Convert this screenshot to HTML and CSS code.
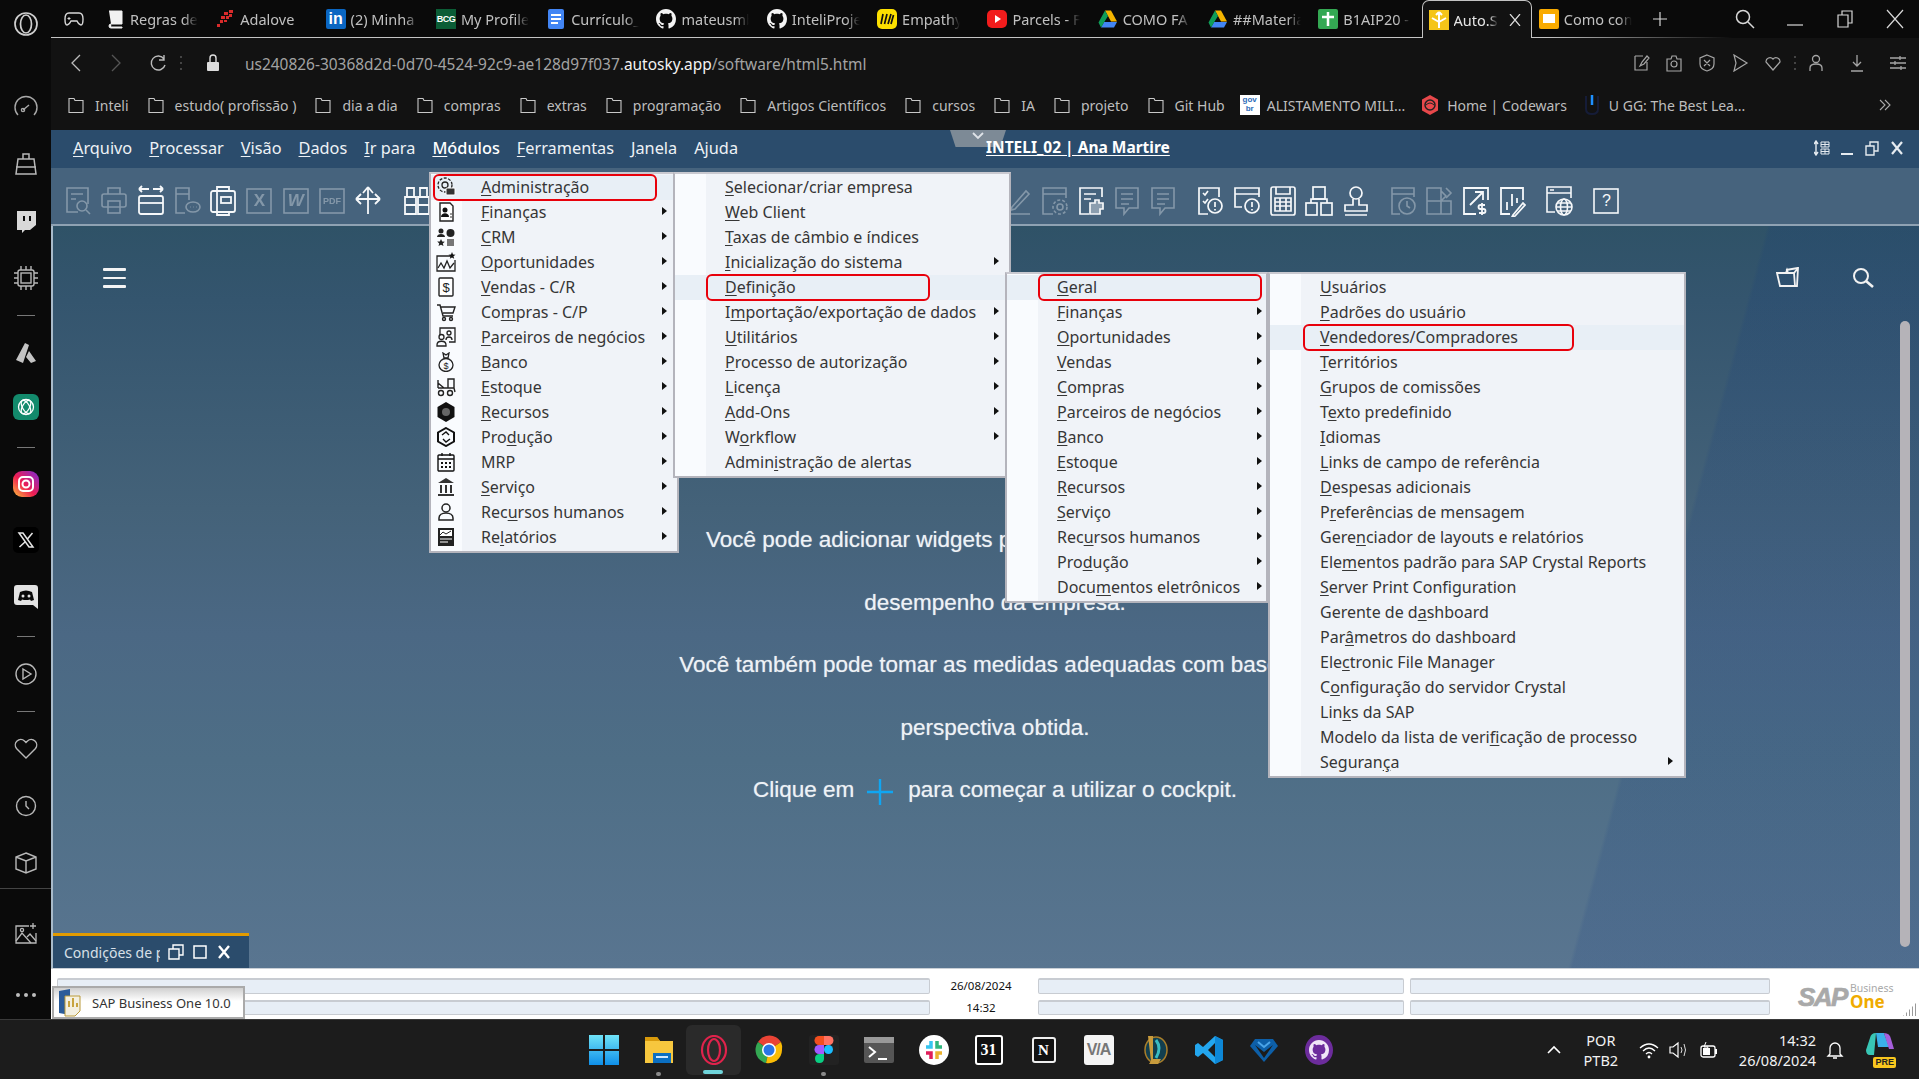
FILE: index.html
```html
<!DOCTYPE html>
<html lang="pt-BR">
<head>
<meta charset="utf-8">
<title>Auto.SAP</title>
<link rel="stylesheet" href="styles.css">
</head>
<body>
<svg class="defs" aria-hidden="true">
<defs>
<symbol id="gh" viewBox="0 0 16 16"><path fill="currentColor" d="M8 0C3.58 0 0 3.58 0 8c0 3.54 2.29 6.53 5.47 7.59.4.07.55-.17.55-.38 0-.19-.01-.82-.01-1.49-2.01.37-2.53-.49-2.69-.94-.09-.23-.48-.94-.82-1.13-.28-.15-.68-.52-.01-.53.63-.01 1.08.58 1.23.82.72 1.21 1.87.87 2.33.66.07-.52.28-.87.51-1.07-1.78-.2-3.64-.89-3.64-3.95 0-.87.31-1.59.82-2.15-.08-.2-.36-1.02.08-2.12 0 0 .67-.21 2.2.82.64-.18 1.32-.27 2-.27.68 0 1.36.09 2 .27 1.53-1.04 2.2-.82 2.2-.82.44 1.1.16 1.92.08 2.12.51.56.82 1.27.82 2.15 0 3.07-1.87 3.75-3.65 3.95.29.25.54.73.54 1.48 0 1.07-.01 1.93-.01 2.2 0 .21.15.46.55.38A8.013 8.013 0 0016 8c0-4.42-3.58-8-8-8z"/></symbol>
<symbol id="drive" viewBox="0 0 20 20"><path fill="#f4b400" d="M7 1.500h6l6 11h-6z"/><path fill="#4285f4" d="M6 13h13l-3 5.500H3z"/><path fill="#0f9d58" d="M7 1.500 10 7l-4 6.500-3 5-2.500-5z"/></symbol>
<symbol id="folder" viewBox="0 0 16 18"><path fill="none" stroke="#c8c8c8" stroke-width="1.100" d="M1 2.500h5l1 2h8v12H1z"/></symbol>

<symbol id="t-find" viewBox="0 0 28 32"><g fill="none" stroke="currentColor" stroke-width="1.600"><path d="M14 27H3V3h21v16"/><path d="M7 9h12M7 14h5"/><circle cx="18" cy="21" r="5"/><path d="m22 25 4 4"/></g></symbol>
<symbol id="t-print" viewBox="0 0 28 32"><g fill="none" stroke="currentColor" stroke-width="1.600"><path d="M8 9V3h12v6"/><rect x="2" y="9" width="24" height="13" rx="2"/><rect x="8" y="16" width="12" height="12"/></g></symbol>
<symbol id="t-width" viewBox="0 0 28 32"><g fill="none" stroke="currentColor" stroke-width="1.800"><path d="M2 4h10M2 4l3-3M2 4l3 3M26 4H16M26 4l-3-3M26 4l-3 3"/><rect x="2" y="11" width="24" height="18" rx="2"/><path d="M2 18h24"/></g></symbol>
<symbol id="t-doc" viewBox="0 0 28 32"><g fill="none" stroke="currentColor" stroke-width="1.600"><path d="M12 28H3V3h13v12M3 9h13"/><ellipse cx="20" cy="22" rx="7" ry="5"/><path d="M17 22h.5M20 22h.5M23 22h.5"/></g></symbol>
<symbol id="t-window" viewBox="0 0 28 32"><g fill="none" stroke="currentColor" stroke-width="1.800"><rect x="2" y="6" width="24" height="21" rx="2"/><path d="M8 6V2h12v4M8 27v3h12v-3M8 6v21"/><rect x="12" y="12" width="10" height="6"/></g></symbol>
<symbol id="t-box" viewBox="0 0 28 32"><rect x="2" y="4" width="24" height="24" fill="none" stroke="currentColor" stroke-width="1.600"/></symbol>
<symbol id="t-move" viewBox="0 0 28 32"><g fill="none" stroke="currentColor" stroke-width="1.800"><path d="M14 2v27M2 14h24M14 2l-5 6M14 2l5 6M2 14l5-5M2 14l5 5M26 14l-5-5M26 14l-5 5"/></g></symbol>
<symbol id="t-bino" viewBox="0 0 28 32"><g fill="none" stroke="currentColor" stroke-width="1.800"><path d="M4 12V3h7v9M17 12V3h7v9M2 12h11v17H2zM15 12h11v17H15zM2 20h11M15 20h11"/></g></symbol>
<symbol id="t-pencil" viewBox="0 0 28 32"><g fill="none" stroke="currentColor" stroke-width="1.600"><path d="m8 22 14-16 3 3-14 15-4 1zM2 29h24"/></g></symbol>
<symbol id="t-gear" viewBox="0 0 28 32"><g fill="none" stroke="currentColor" stroke-width="1.600"><path d="M26 13V3H3v26h10M3 9h23"/><circle cx="20" cy="22" r="3"/><circle cx="20" cy="22" r="7" stroke-dasharray="3 2"/></g></symbol>
<symbol id="t-puzzle" viewBox="0 0 28 32"><g fill="none" stroke="currentColor" stroke-width="1.700"><path d="M12 29H3V3h22v9M7 9h12M7 14h7"/><path d="M13 29V18h5v-3h4v3h4v6h-3v5z" fill="currentColor" fill-opacity=".4"/></g></symbol>
<symbol id="t-chat" viewBox="0 0 28 32"><g fill="none" stroke="currentColor" stroke-width="1.600"><path d="M3 3h22v20h-9l-5 6v-6H3zM8 9h12M8 14h12M8 19h8"/></g></symbol>
<symbol id="t-alert" viewBox="0 0 28 32"><g fill="none" stroke="currentColor" stroke-width="1.700"><path d="M12 29H3V3h20v9"/><path d="m7 8 2 2 3-4M7 16l2 2 3-4"/><circle cx="19" cy="21" r="7"/><path d="M19 17v5M19 24v1.500"/></g></symbol>
<symbol id="t-walert" viewBox="0 0 28 32"><g fill="none" stroke="currentColor" stroke-width="1.700"><path d="M9 22H2V3h24v9M2 9h24"/><circle cx="19" cy="21" r="7"/><path d="M19 17v5M19 24v1.500"/></g></symbol>
<symbol id="t-calc" viewBox="0 0 28 32"><g fill="none" stroke="currentColor" stroke-width="1.700"><rect x="2" y="2" width="24" height="28" rx="2"/><path d="M7 2v7h14V2M6 13h16v13H6zM11 13v13M17 13v13M6 17h16M6 21h16"/></g></symbol>
<symbol id="t-org" viewBox="0 0 28 32"><g fill="none" stroke="currentColor" stroke-width="1.700"><rect x="8" y="2" width="12" height="12"/><rect x="1" y="18" width="11" height="12"/><rect x="16" y="18" width="11" height="12"/><path d="M6 18v-4h16v4"/></g></symbol>
<symbol id="t-stamp" viewBox="0 0 28 32"><g fill="none" stroke="currentColor" stroke-width="1.700"><circle cx="14" cy="8" r="6"/><path d="M11 14v6H3v6h22v-6h-8v-6M3 30h22"/></g></symbol>
<symbol id="t-clock" viewBox="0 0 28 32"><g fill="none" stroke="currentColor" stroke-width="1.600"><path d="M11 29H3V3h22v9M3 9h22"/><circle cx="18" cy="21" r="8"/><path d="M18 16v5l3 2"/></g></symbol>
<symbol id="t-grid" viewBox="0 0 28 32"><g fill="none" stroke="currentColor" stroke-width="1.600"><path d="M2 3h14v26H2zM2 16h24v13H16M16 16V6l5 5-5 5"/><path d="m21 3 5 5-5 5"/></g></symbol>
<symbol id="t-chart" viewBox="0 0 28 32"><g fill="none" stroke="currentColor" stroke-width="1.800"><path d="M14 29H2V3h24v12"/><path d="m8 20 13-13M13 7h8v8"/><path d="M20 18v12M23 20h-4.500a1.800 1.800 0 0 0 0 4h3a1.800 1.800 0 0 1 0 4H17"/></g></symbol>
<symbol id="t-bars" viewBox="0 0 28 32"><g fill="none" stroke="currentColor" stroke-width="1.800"><path d="M12 29H3V3h22v12"/><path d="M9 17v8M14 9v12M19 13v5"/><path d="m15 30 10-12 2 2-10 11-3 1z"/></g></symbol>
<symbol id="t-globe" viewBox="0 0 28 32"><g fill="none" stroke="currentColor" stroke-width="1.600"><path d="M10 27H2V2h24v11M2 8h24M5 5h4"/><circle cx="19" cy="22" r="8"/><ellipse cx="19" cy="22" rx="3.500" ry="8"/><path d="M11 22h16M12 18h14M12 26h14"/></g></symbol>

<symbol id="m-admin" viewBox="0 0 20 20"><g fill="none" stroke="#222" stroke-width="1.300"><circle cx="9" cy="8" r="3"/><circle cx="9" cy="8" r="7" stroke-dasharray="3 1.500"/></g><rect x="10" y="11" width="9" height="7" rx="1" fill="#333" stroke="#fff"/></symbol>
<symbol id="m-fin" viewBox="0 0 20 20"><path d="M4 1h10l3 3v15H4z" fill="#fff" stroke="#222" stroke-width="1.400"/><circle cx="9" cy="8" r="2.500" fill="#111"/><path d="M5 15c0-5 8-5 8 0z" fill="#111"/><path d="M14 12h2M14 15h2" stroke="#333"/></symbol>
<symbol id="m-crm" viewBox="0 0 20 20"><circle cx="5" cy="4" r="2.500" fill="#222"/><path d="M1 10c0-4 8-4 8 0z" fill="#222"/><circle cx="14.500" cy="6" r="4" fill="#222"/><path d="m5 12 1.200 2.500 2.600.2-2 1.800.7 2.600L5 17.700 2.500 19l.7-2.600-2-1.800 2.600-.2z" fill="#222"/><rect x="11" y="12" width="7" height="7" fill="#777"/></symbol>
<symbol id="m-opp" viewBox="0 0 20 20"><g fill="none" stroke="#222" stroke-width="1.300"><path d="M15 4H1v15h18V8"/><path d="m2 16 3-5 3 5 3-7 3 7 4-5"/></g><path d="m16 0 1 2.500 2.500.2-2 1.600.7 2.500-2.200-1.400-2.200 1.400.7-2.500-2-1.600 2.500-.2z" fill="#111"/></symbol>
<symbol id="m-sale" viewBox="0 0 20 20"><rect x="3" y="1" width="14" height="18" rx="1" fill="#fff" stroke="#222" stroke-width="1.400"/></symbol>
<symbol id="m-cart" viewBox="0 0 20 20"><g fill="none" stroke="#222" stroke-width="1.400"><path d="M1 3h3l3 11h10M5 5h14l-2 6H7"/><circle cx="8" cy="17" r="1.500"/><circle cx="15" cy="17" r="1.500"/></g></symbol>
<symbol id="m-part" viewBox="0 0 20 20"><g fill="none" stroke="#222" stroke-width="1.300"><path d="M4 8V1h15v14h-6"/><circle cx="5.500" cy="10" r="2.500"/><path d="M1 18c0-5 9-5 9 0v1H1z"/><circle cx="13" cy="6" r="2"/><path d="M10 13c0-4 6-4 6 0"/></g></symbol>
<symbol id="m-bank" viewBox="0 0 20 20"><g fill="none" stroke="#222" stroke-width="1.300"><path d="m7 1 3 2 3-2-1 5H8z"/><ellipse cx="10" cy="13" rx="7" ry="6.500"/></g><text x="10" y="16.500" font-size="9" text-anchor="middle" fill="#222" font-family="Liberation Sans">$</text></symbol>
<symbol id="m-stock" viewBox="0 0 20 20"><g fill="none" stroke="#222" stroke-width="1.400"><circle cx="5" cy="16" r="2.500"/><circle cx="14" cy="16" r="2.500"/><path d="M2 11h16l1 4M2 11V3M2 6l6 5M12 2h6v9h-6z"/></g></symbol>
<symbol id="m-res" viewBox="0 0 20 20"><path d="m10 0 8.500 5v10L10 20 1.500 15V5z" fill="#111"/><circle cx="10" cy="10" r="4" fill="#666"/></symbol>
<symbol id="m-prod" viewBox="0 0 20 20"><g fill="none" stroke="#111" stroke-width="2"><path d="m10 1 8 4.500v9L10 19l-8-4.500v-9z"/><path d="m6 8 4-3 3 3M14 12l-4 3-3-3" stroke-width="1.400"/></g></symbol>
<symbol id="m-mrp" viewBox="0 0 20 20"><g fill="none" stroke="#111" stroke-width="1.400"><rect x="2" y="3" width="16" height="16" rx="1"/><path d="M2 7h16M6 1v3M14 1v3"/></g><path d="M5 10h2v2H5zM9 10h2v2H9zM13 10h2v2h-2zM5 14h2v2H5zM9 14h2v2H9zM13 14h2v2h-2z" fill="#111"/></symbol>
<symbol id="m-serv" viewBox="0 0 20 20"><path d="m10 1 8 5H2zM2 17h16v2H2zM4 8h2v8H4zM9 8h2v8H9zM14 8h2v8h-2z" fill="#333"/></symbol>
<symbol id="m-hr" viewBox="0 0 20 20"><g fill="none" stroke="#222" stroke-width="1.500"><circle cx="10" cy="6" r="4"/><path d="M3 18v-2c0-3 3-5 7-5s7 2 7 5v2z"/></g></symbol>
<symbol id="m-rep" viewBox="0 0 20 20"><rect x="2" y="1" width="16" height="18" fill="#222"/><rect x="4" y="3" width="12" height="6" fill="#fff"/><path d="m4 8 3-3 3 2 5-3" stroke="#222" fill="none"/><path d="M4 12h12M4 15h8" stroke="#fff" stroke-width="1.200"/></symbol>
</defs>
</svg>

<div class="desktop">
  <div class="browser">
    <aside class="sidebar">
      <div class="side-top">
        <svg class="i26" viewBox="0 0 26 26"><g fill="none" stroke="#cfcfcf" stroke-width="1.700"><circle cx="13" cy="13" r="11"/><ellipse cx="13" cy="13" rx="5.500" ry="9"/></g></svg>
      </div>
      <div class="slot"><svg class="i26" viewBox="0 0 26 26"><g fill="none" stroke="#a8a8a8" stroke-width="1.400"><path d="M5 21a11 11 0 1 1 16 0"/><path d="m10 16 6-5"/><circle cx="10" cy="16" r="1.600"/></g></svg></div>
      <div class="slot"><svg class="i26" viewBox="0 0 26 26"><g fill="none" stroke="#b8b8b8" stroke-width="1.500"><path d="M10 8V3h6v5M5 8h16l2 15H3zM3 16h20"/></g></svg></div>
      <div class="slot"><svg class="i26" viewBox="0 0 26 26"><path d="M4 3h19v14l-6 5h-5l-3 3v-3H4z" fill="#d8d8d8"/><path d="M11 8v5M17 8v5" stroke="#0a0a0a" stroke-width="2"/></svg></div>
      <div class="slot"><svg class="i26" viewBox="0 0 26 26"><g fill="none" stroke="#b8b8b8" stroke-width="1.400"><rect x="5" y="5" width="16" height="16" rx="2"/><rect x="8" y="8" width="10" height="10"/><path d="M1 8h4M1 13h4M1 18h4M21 8h4M21 13h4M21 18h4M8 1v4M13 1v4M18 1v4M8 21v4M13 21v4M18 21v4"/></g></svg></div>
      <div class="side-sep"></div>
      <div class="slot"><svg class="i26" viewBox="0 0 26 26"><path d="m12 3 4 2-6 18-7-3zM16 11l7 10-5 2-5-6z" fill="#c4c4c4"/></svg></div>
      <div class="slot slot-gpt"><svg class="i26" viewBox="0 0 26 26"><rect x="0" y="0" width="26" height="26" rx="6" fill="#138a6c"/><g fill="none" stroke="#fff" stroke-width="1.300"><circle cx="13" cy="13" r="7.500"/><ellipse cx="13" cy="13" rx="7.500" ry="3.500" transform="rotate(60 13 13)"/><ellipse cx="13" cy="13" rx="7.500" ry="3.500" transform="rotate(-60 13 13)"/></g></svg></div>
      <div class="side-sep"></div>
      <div class="slot slot-up"><svg class="i26" viewBox="0 0 26 26"><defs><linearGradient id="ig" x1="0" y1="1" x2="1" y2="0"><stop offset="0" stop-color="#fdc13b"/><stop offset=".45" stop-color="#ee1d52"/><stop offset="1" stop-color="#7c2bd6"/></linearGradient></defs><rect width="26" height="26" rx="9" fill="url(#ig)"/><g fill="none" stroke="#fff" stroke-width="2"><rect x="6" y="6" width="14" height="14" rx="4"/><circle cx="13" cy="13" r="3.500"/></g></svg></div>
      <div class="slot slot-up2"><svg class="i26" viewBox="0 0 26 26"><rect width="26" height="26" rx="5" fill="#000"/><path d="M6 6h4l10 14h-4zM19.500 6 14 12.500M12 15l-5.500 5" fill="none" stroke="#e6e6e6" stroke-width="1.500"/></svg></div>
      <div class="slot slot-down"><svg class="i26" viewBox="0 0 26 26"><path d="M4 1h18q3 0 3 3v21l-5-4H4q-3 0-3-3V4q0-3 3-3z" fill="#e3e3e3"/><path d="M7 8q6-3 12 0l2 8-3 1-1-1.500q-4 1-8 0L8 17l-3-1z" fill="#0a0a0a"/><circle cx="10" cy="12" r="1.500" fill="#e3e3e3"/><circle cx="16" cy="12" r="1.500" fill="#e3e3e3"/></svg></div>
      <div class="side-sep"></div>
      <div class="slot"><svg class="i26" viewBox="0 0 26 26"><g fill="none" stroke="#b8b8b8" stroke-width="1.400"><circle cx="13" cy="13" r="10"/><path d="m10 8 8 5-8 5z"/></g></svg></div>
      <div class="side-sep"></div>
      <div class="slot"><svg class="i26" viewBox="0 0 26 26"><path d="M13 22 3.500 12.500a5.500 5.500 0 0 1 8-7.500l1.500 1.500L14.500 5a5.500 5.500 0 0 1 8 7.500z" fill="none" stroke="#b8b8b8" stroke-width="1.400"/></svg></div>
      <div class="slot"><svg class="i26" viewBox="0 0 26 26"><g fill="none" stroke="#b8b8b8" stroke-width="1.400"><circle cx="13" cy="13" r="9.500"/><path d="M13 8v5l3 3"/></g></svg></div>
      <div class="slot slot-last"><svg class="i26" viewBox="0 0 26 26"><g fill="none" stroke="#b8b8b8" stroke-width="1.400"><path d="m13 3 10 4v12l-10 4-10-4V7zM3 7l10 4 10-4M13 11v12"/></g></svg></div>
      <div class="side-line"></div>
      <div class="slot slot-img"><svg class="i26" viewBox="0 0 26 26"><g fill="none" stroke="#b8b8b8" stroke-width="1.300"><path d="M16 5H3v17h20v-10"/><path d="m3 20 6-8 9 10M14 16l3-3 6 7"/><circle cx="9" cy="9" r="1.600"/><path d="M20 2v6M17 5h6"/></g></svg></div>
      <div class="side-dots"><span></span><span></span><span></span></div>
    </aside>

    <div class="window">
      <div class="tabs">
        <div class="tab-game"><svg class="i20" viewBox="0 0 20 20"><path d="M5 4h10q4 0 4 6t-2 6q-2 0-4-4H7q-2 4-4 4T1 10t4-6z" fill="none" stroke="#d8d8d8" stroke-width="1.400"/><path d="M5 8v3M3.500 9.500h3" stroke="#d8d8d8"/></svg></div>
        <div class="tab"><svg class="i20" viewBox="0 0 20 20"><path d="M4 2h13v13H6q-2 0-2 2t2 2h11v-1H6.500" fill="#f1f1f1" stroke="#f1f1f1"/></svg><span class="tab-label">Regras de</span></div>
        <div class="tab"><svg class="i20" viewBox="0 0 20 20"><g fill="#d92b2b"><rect x="14" y="1" width="4" height="3"/><rect x="9" y="3" width="4" height="3"/><rect x="14" y="5" width="3" height="3"/><rect x="6" y="7" width="4" height="3"/><rect x="11" y="7" width="3" height="3"/><rect x="5" y="11" width="3" height="3"/><rect x="9" y="11" width="3" height="2"/><rect x="2" y="15" width="3" height="3"/></g></svg><span class="tab-label">Adalove</span></div>
        <div class="tab"><span class="fav fav-in">in</span><span class="tab-label">(2) Minha</span></div>
        <div class="tab"><span class="fav fav-bcg">BCG</span><span class="tab-label">My Profile</span></div>
        <div class="tab"><svg class="i20" viewBox="0 0 20 20"><rect x="2" width="16" height="20" rx="2" fill="#4285f4"/><path d="M5 6h10M5 10h10M5 14h7" stroke="#fff" stroke-width="1.800"/></svg><span class="tab-label">Currículo_</span></div>
        <div class="tab"><svg class="i20 gh"><use href="#gh"/></svg><span class="tab-label">mateusmb</span></div>
        <div class="tab"><svg class="i20 gh"><use href="#gh"/></svg><span class="tab-label">InteliProje</span></div>
        <div class="tab"><svg class="i20" viewBox="0 0 20 20"><rect width="20" height="20" rx="5" fill="#fce000"/><path d="m6 5-2 10M10 5l-2.500 10M14 5l-3 10M16.500 6 14 15" stroke="#111" stroke-width="1.700" fill="none"/></svg><span class="tab-label tab-cut">Empathy</span></div>
        <div class="tab"><svg class="i20" viewBox="0 0 20 20"><rect y="1" width="20" height="18" rx="5" fill="#f21c1c"/><path d="m8 6 6 4-6 4z" fill="#fff"/></svg><span class="tab-label">Parcels - F</span></div>
        <div class="tab"><svg class="i20"><use href="#drive"/></svg><span class="tab-label">COMO FA</span></div>
        <div class="tab"><svg class="i20"><use href="#drive"/></svg><span class="tab-label">##Materia</span></div>
        <div class="tab"><svg class="i20" viewBox="0 0 20 20"><rect width="20" height="20" rx="2" fill="#34a853"/><path d="M10 3v14M4 8h12" stroke="#fff" stroke-width="2.500"/></svg><span class="tab-label">B1AIP20 -</span></div>
        <div class="tab tab-active"><svg class="i20" viewBox="0 0 20 20"><rect width="20" height="20" fill="#f5c518"/><path d="M10 2v16M10 2 7 5M10 2l3 3M10 12 3 8M10 12l7-4" stroke="#fff" stroke-width="2" fill="none"/></svg><span class="tab-label tab-short">Auto.S</span><svg class="i12" viewBox="0 0 12 12"><path d="m1 0 10 12M11 0 1 12" stroke="#ddd" stroke-width="1.200"/></svg></div>
        <div class="tab"><svg class="i20" viewBox="0 0 20 20"><rect width="20" height="20" rx="2" fill="#f9ab00"/><rect x="4" y="5" width="12" height="9" fill="#fff"/></svg><span class="tab-label">Como con</span></div>
        <svg class="tab-plus" viewBox="0 0 14 14"><path d="M7 0v14M0 7h14" stroke="#d8d8d8" stroke-width="1.200"/></svg>
        <div class="win-ctrls">
          <svg class="i20" viewBox="0 0 20 20"><g fill="none" stroke="#d8d8d8" stroke-width="1.500"><circle cx="8" cy="8" r="6.500"/><path d="m13 13 6 6"/></g></svg>
          <svg class="i20" viewBox="0 0 20 20"><path d="M2 16h16" stroke="#d8d8d8" stroke-width="1.200"/></svg>
          <svg class="i20" viewBox="0 0 20 20"><path d="M3 6h10v12H3zM7 6V2h10v12h-4" fill="none" stroke="#d8d8d8" stroke-width="1.200"/></svg>
          <svg class="i20" viewBox="0 0 20 20"><path d="m2 1 16 18M18 1 2 19" stroke="#d8d8d8" stroke-width="1.200"/></svg>
        </div>
      </div>

      <div class="addr">
        <svg class="nav nav-back" viewBox="0 0 12 20"><path d="M10 2 2 10l8 8" fill="none" stroke="#bbb" stroke-width="1.300"/></svg>
        <svg class="nav nav-fwd" viewBox="0 0 12 20"><path d="m2 2 8 8-8 8" fill="none" stroke="#555" stroke-width="1.300"/></svg>
        <svg class="nav nav-reload" viewBox="0 0 18 20"><path d="M15 6a7 7 0 1 0 1 6M15 2v5h-5" fill="none" stroke="#bbb" stroke-width="1.400"/></svg>
        <span class="nav-dots"></span>
        <svg class="nav nav-lock" viewBox="0 0 14 20"><path d="M4 9V5a3 3 0 0 1 6 0v4" fill="none" stroke="#ddd" stroke-width="1.400"/><rect x="1" y="9" width="12" height="9" rx="1" fill="#ddd"/></svg>
        <span class="url">us240826-30368d2d-0d70-4524-92c9-ae128d97f037.<b>autosky.app</b>/software/html5.html</span>
        <div class="addr-tools">
          <svg class="i18" viewBox="0 0 18 18"><path d="M3 2h8M3 2v14h12V8M8 12l2-4 5-6 2 2-5 6z" fill="none" stroke="#a5a5a5" stroke-width="1.200"/></svg>
          <svg class="i18" viewBox="0 0 18 18"><g fill="none" stroke="#a5a5a5" stroke-width="1.200"><path d="M2 5h4l1-3h4l1 3h4v12H2z"/><circle cx="9" cy="10" r="3"/></g></svg>
          <svg class="i18" viewBox="0 0 18 18"><path d="m9 1 7 3v6q0 5-7 7-7-2-7-7V4zM6 6l6 6M12 6l-6 6" fill="none" stroke="#a5a5a5" stroke-width="1.200"/></svg>
          <svg class="i18" viewBox="0 0 18 18"><path d="m3 1 13 8-13 8 2-8z" fill="none" stroke="#a5a5a5" stroke-width="1.200"/></svg>
          <svg class="i18" viewBox="0 0 18 18"><path d="M9 16 2 8a4 4 0 0 1 7-3 4 4 0 0 1 7 3z" fill="none" stroke="#a5a5a5" stroke-width="1.200"/></svg>
          <span class="tool-gap"></span>
          <svg class="i18" viewBox="0 0 18 18"><g fill="none" stroke="#a5a5a5" stroke-width="1.300"><circle cx="9" cy="5" r="3.500"/><path d="M3 17v-3q0-4 6-4t6 4v3"/></g></svg>
          <svg class="i18 tool-wide" viewBox="0 0 18 18"><path d="M9 1v11M5 8l4 4 4-4M3 17h12" fill="none" stroke="#a5a5a5" stroke-width="1.300"/></svg>
          <svg class="i18 tool-wide" viewBox="0 0 18 18"><path d="M1 4h16M1 9h16M1 14h16M11 2v4M6 7v4M12 12v4" fill="none" stroke="#a5a5a5" stroke-width="1.300"/></svg>
        </div>
      </div>

      <div class="marks">
        <span class="mark"><svg class="i-folder"><use href="#folder"/></svg>Inteli</span>
        <span class="mark"><svg class="i-folder"><use href="#folder"/></svg>estudo( profissão )</span>
        <span class="mark"><svg class="i-folder"><use href="#folder"/></svg>dia a dia</span>
        <span class="mark"><svg class="i-folder"><use href="#folder"/></svg>compras</span>
        <span class="mark"><svg class="i-folder"><use href="#folder"/></svg>extras</span>
        <span class="mark"><svg class="i-folder"><use href="#folder"/></svg>programação</span>
        <span class="mark"><svg class="i-folder"><use href="#folder"/></svg>Artigos Científicos</span>
        <span class="mark"><svg class="i-folder"><use href="#folder"/></svg>cursos</span>
        <span class="mark"><svg class="i-folder"><use href="#folder"/></svg>IA</span>
        <span class="mark"><svg class="i-folder"><use href="#folder"/></svg>projeto</span>
        <span class="mark"><svg class="i-folder"><use href="#folder"/></svg>Git Hub</span>
        <span class="mark mark-fav"><span class="fav-gov">gov<br>br</span>ALISTAMENTO MILI...</span>
        <span class="mark mark-fav"><svg class="i20" viewBox="0 0 20 20"><path d="m10 0 8 4.500v11L10 20l-8-4.500v-11z" fill="#e8484b"/><circle cx="10" cy="10" r="5" fill="none" stroke="#222" stroke-width="1.500"/><path d="M6 10q4-4 8 0" stroke="#222" fill="none"/></svg>Home | Codewars</span>
        <span class="mark mark-fav"><svg class="i20" viewBox="0 0 20 20"><path d="M4 1v13q0 5 6 5t6-5V1" fill="none" stroke="#151c38" stroke-width="2"/><path d="M10 0v10" stroke="#1e90ff" stroke-width="2.500"/></svg>U GG: The Best Lea...</span>
        <svg class="marks-more" viewBox="0 0 14 14"><path d="m2 2 5 5-5 5M7 2l5 5-5 5" fill="none" stroke="#aaa" stroke-width="1.100"/></svg>
      </div>

      <div class="sap">
        <div class="sap-title">
          <nav class="sap-menu">
            <span><u>A</u>rquivo</span><span><u>P</u>rocessar</span><span><u>V</u>isão</span><span><u>D</u>ados</span><span><u>I</u>r para</span><span class="on"><u>M</u>ódulos</span><span><u>F</u>erramentas</span><span><u>J</u>anela</span><span>A<u>j</u>uda</span>
          </nav>
          <div class="sap-handle"><svg class="i12" viewBox="0 0 12 12"><path d="m1 3 5 5 5-5" fill="none" stroke="#dfe3e8" stroke-width="1.800"/></svg></div>
          <span class="sap-user">INTELI_02 | Ana Martire</span>
          <div class="sap-ctrls">
            <svg class="i16" viewBox="0 0 16 16"><path d="M2 1v14M0 4l2-3 2 3M0 12l2 3 2-3" stroke="#e6ebf0" stroke-width="1.400" fill="none"/><path d="M7 2h8v5H7zM7 9h8v5H7zM11 2v5M11 9v5M7 4.500h8M7 11.500h8" stroke="#e6ebf0" fill="none"/></svg>
            <svg class="i16" viewBox="0 0 16 16"><path d="M2 14h12" stroke="#e6ebf0" stroke-width="2"/></svg>
            <svg class="i16" viewBox="0 0 16 16"><path d="M2 6h8v9H2zM6 6V2h8v9h-4" fill="none" stroke="#e6ebf0" stroke-width="1.400"/></svg>
            <svg class="i16" viewBox="0 0 16 16"><path d="m3 2 10 12M13 2 3 14" stroke="#e6ebf0" stroke-width="2.200"/></svg>
          </div>
        </div>

        <div class="sap-tools">
          <svg class="ti dim"><use href="#t-find"/></svg>
          <svg class="ti dim"><use href="#t-print"/></svg>
          <svg class="ti"><use href="#t-width"/></svg>
          <svg class="ti dim"><use href="#t-doc"/></svg>
          <svg class="ti"><use href="#t-window"/></svg>
          <span class="ti-box dim"><svg class="ti-abs"><use href="#t-box"/></svg><b>X</b></span>
          <span class="ti-box dim"><svg class="ti-abs"><use href="#t-box"/></svg><i>W</i></span>
          <span class="ti-box dim"><svg class="ti-abs"><use href="#t-box"/></svg><b class="pdf">PDF</b></span>
          <svg class="ti"><use href="#t-move"/></svg>
          <svg class="ti ti-after"><use href="#t-bino"/></svg>
          <svg class="ti ti-hidden dim"><use href="#t-pencil"/></svg>
          <svg class="ti dim"><use href="#t-gear"/></svg>
          <svg class="ti"><use href="#t-puzzle"/></svg>
          <svg class="ti dim"><use href="#t-chat"/></svg>
          <svg class="ti dim"><use href="#t-chat"/></svg>
          <svg class="ti ti-gap"><use href="#t-alert"/></svg>
          <svg class="ti"><use href="#t-walert"/></svg>
          <svg class="ti"><use href="#t-calc"/></svg>
          <svg class="ti"><use href="#t-org"/></svg>
          <svg class="ti"><use href="#t-stamp"/></svg>
          <svg class="ti ti-gap dim"><use href="#t-clock"/></svg>
          <svg class="ti dim"><use href="#t-grid"/></svg>
          <svg class="ti"><use href="#t-chart"/></svg>
          <svg class="ti"><use href="#t-bars"/></svg>
          <svg class="ti ti-gap"><use href="#t-globe"/></svg>
          <span class="ti-box ti-gap"><svg class="ti-abs"><use href="#t-box"/></svg><em>?</em></span>
        </div>

        <main class="sap-main">
          <div class="main-top">
            <div class="burger"><span></span><span></span><span></span></div>
            <svg class="main-ic" viewBox="0 0 24 22"><g fill="none" stroke="#f2f2f2" stroke-width="1.800"><path d="M1 6h9l1-3 1 3M4 19 1 6h17l4-5-1 18z"/><path d="M18 6l1 13M10 3l12-2"/></g></svg>
            <svg class="main-ic main-ic-s" viewBox="0 0 22 22"><g fill="none" stroke="#f2f2f2" stroke-width="2"><circle cx="9" cy="9" r="7"/><path d="m14 14 7 6" stroke-width="2.600"/></g></svg>
          </div>
          <div class="scroll"></div>
          <div class="intro">
            <p>Você pode adicionar widgets para acompanhar o principal</p>
            <p>desempenho da empresa.</p>
            <p>Você também pode tomar as medidas adequadas com base na</p>
            <p>perspectiva obtida.</p>
            <p class="intro-plus">Clique em <svg class="plus" viewBox="0 0 26 26"><path d="M13 0v26M0 13h26" stroke="#0fa6f2" stroke-width="2.400"/></svg> para começar a utilizar o cockpit.</p>
          </div>
          <div class="dock">
            <span class="dock-text">Condições de p</span>
            <svg class="i16 dock-a" viewBox="0 0 16 16"><path d="M1 5h10v10H1zM5 5V1h10v10h-4" fill="none" stroke="#fff" stroke-width="1.400"/></svg>
            <svg class="i16 dock-b" viewBox="0 0 16 16"><rect x="2" y="2" width="12" height="12" fill="none" stroke="#fff" stroke-width="1.500"/></svg>
            <svg class="i16 dock-b" viewBox="0 0 16 16"><path d="m3 2 10 12M13 2 3 14" stroke="#fff" stroke-width="2.400"/></svg>
          </div>
        </main>

        <div class="status">
          <span class="fld fld-1"></span>
          <span class="st-date">26/08/2024</span>
          <span class="fld"></span>
          <span class="fld"></span>
          <span class="st-logo">
            <span class="logo-sap">SAP</span>
            <span class="logo-r"><span class="logo-bus">Business</span><span class="logo-one">One</span></span>
          </span>
          <span class="fld fld-1"></span>
          <span class="st-date">14:32</span>
          <span class="fld"></span>
          <span class="fld"></span>
          <span class="grip"></span>
        </div>

        <div class="preview">
          <svg class="preview-ic" viewBox="0 0 24 28"><path d="M1 2 12 0v26L1 24z" fill="#2b5c9a"/><path d="M7 7h15v15l-5 5H7z" fill="#f4f0e0" stroke="#b99a3b"/><path d="M11 18v-6M15 18V9M19 18v-4" stroke="#c8a43e" stroke-width="2"/></svg>
          <span>SAP Business One 10.0</span>
        </div>

        <ul class="menu m1">
          <li class="hov"><svg class="mi"><use href="#m-admin"/></svg><u>A</u>dministração<span class="redbox rb-1"></span></li>
          <li class="sub"><svg class="mi"><use href="#m-fin"/></svg><u>F</u>inanças</li>
          <li class="sub"><svg class="mi"><use href="#m-crm"/></svg><u>C</u>RM</li>
          <li class="sub"><svg class="mi"><use href="#m-opp"/></svg><u>O</u>portunidades</li>
          <li class="sub"><span class="mi-dollar"><svg class="mi"><use href="#m-sale"/></svg><b>$</b></span><u>V</u>endas - C/R</li>
          <li class="sub"><svg class="mi"><use href="#m-cart"/></svg>Co<u>m</u>pras - C/P</li>
          <li class="sub"><svg class="mi"><use href="#m-part"/></svg><u>P</u>arceiros de negócios</li>
          <li class="sub"><svg class="mi"><use href="#m-bank"/></svg><u>B</u>anco</li>
          <li class="sub"><svg class="mi"><use href="#m-stock"/></svg><u>E</u>stoque</li>
          <li class="sub"><svg class="mi"><use href="#m-res"/></svg><u>R</u>ecursos</li>
          <li class="sub"><svg class="mi"><use href="#m-prod"/></svg>Pro<u>d</u>ução</li>
          <li class="sub"><svg class="mi"><use href="#m-mrp"/></svg>MRP</li>
          <li class="sub"><svg class="mi"><use href="#m-serv"/></svg><u>S</u>erviço</li>
          <li class="sub"><svg class="mi"><use href="#m-hr"/></svg>Rec<u>u</u>rsos humanos</li>
          <li class="sub"><svg class="mi"><use href="#m-rep"/></svg>Re<u>l</u>atórios</li>
        </ul>

        <ul class="menu m2">
          <li><u>S</u>elecionar/criar empresa</li>
          <li><u>W</u>eb Client</li>
          <li><u>T</u>axas de câmbio e índices</li>
          <li class="sub"><u>I</u>nicialização do sistema</li>
          <li class="hov"><u>D</u>efinição<span class="redbox rb-2"></span></li>
          <li class="sub">I<u>m</u>portação/exportação de dados</li>
          <li class="sub"><u>U</u>tilitários</li>
          <li class="sub"><u>P</u>rocesso de autorização</li>
          <li class="sub"><u>L</u>icença</li>
          <li class="sub"><u>A</u>dd-Ons</li>
          <li class="sub">W<u>o</u>rkflow</li>
          <li>Admin<u>i</u>stração de alertas</li>
        </ul>

        <ul class="menu m3">
          <li class="hov"><u>G</u>eral<span class="redbox rb-2"></span></li>
          <li class="sub"><u>F</u>inanças</li>
          <li class="sub"><u>O</u>portunidades</li>
          <li class="sub"><u>V</u>endas</li>
          <li class="sub"><u>C</u>ompras</li>
          <li class="sub"><u>P</u>arceiros de negócios</li>
          <li class="sub"><u>B</u>anco</li>
          <li class="sub"><u>E</u>stoque</li>
          <li class="sub"><u>R</u>ecursos</li>
          <li class="sub"><u>S</u>erviço</li>
          <li class="sub">Rec<u>u</u>rsos humanos</li>
          <li class="sub">Pro<u>d</u>ução</li>
          <li class="sub">Docu<u>m</u>entos eletrônicos</li>
        </ul>

        <ul class="menu m4">
          <li><u>U</u>suários</li>
          <li><u>P</u>adrões do usuário</li>
          <li class="hov"><u>V</u>endedores/Compradores<span class="redbox rb-4"></span></li>
          <li><u>T</u>erritórios</li>
          <li><u>G</u>rupos de comissões</li>
          <li>T<u>e</u>xto predefinido</li>
          <li><u>I</u>diomas</li>
          <li><u>L</u>inks de campo de referência</li>
          <li><u>D</u>espesas adicionais</li>
          <li>P<u>r</u>eferências de mensagem</li>
          <li>Gere<u>n</u>ciador de layouts e relatórios</li>
          <li>Ele<u>m</u>entos padrão para SAP Crystal Reports</li>
          <li><u>S</u>erver Print Configuration</li>
          <li>Gerente de d<u>a</u>shboard</li>
          <li>Par<u>â</u>metros do dashboard</li>
          <li>Ele<u>c</u>tronic File Manager</li>
          <li>C<u>o</u>nfiguração do servidor Crystal</li>
          <li>Lin<u>k</u>s da SAP</li>
          <li>Modelo da lista de veri<u>f</u>icação de processo</li>
          <li class="sub">Seguran<u>ç</u>a</li>
        </ul>
      </div>
    </div>
  </div>

  <footer class="taskbar">
    <div class="task-icons">
      <span class="task"><svg class="i30" viewBox="0 0 30 30"><defs><linearGradient id="w" x1="0" y1="0" x2="0" y2="1"><stop offset="0" stop-color="#6fe3f7"/><stop offset="1" stop-color="#0f8fe8"/></linearGradient></defs><path d="M0 0h14v14H0zM16 0h14v14H16zM0 16h14v14H0zM16 16h14v14H16z" fill="url(#w)"/></svg></span>
      <span class="task dot"><svg class="i30" viewBox="0 0 30 30"><path d="M1 2h12l3 4h13v22H1z" fill="#f7c73e"/><path d="M1 2h12l3 4H1z" fill="#d99a0b"/><rect x="9" y="18" width="18" height="10" fill="#0b6fc2"/><rect x="12" y="21" width="12" height="2" fill="#cfe8ff"/></svg></span>
      <span class="task task-on"><svg class="i30" viewBox="0 0 30 30"><g fill="none" stroke="#e0234c" stroke-width="2.200"><ellipse cx="15" cy="15" rx="12" ry="14"/><ellipse cx="15" cy="15" rx="6" ry="11"/></g></svg></span>
      <span class="task"><svg class="i30" viewBox="0 0 30 30"><path d="M15 15 4 7a13.500 13.500 0 0 1 23 0z" fill="#ea4335"/><path d="M15 15 4 7a13.500 13.500 0 0 0 8 21z" fill="#34a853"/><path d="M15 15h13a13.500 13.500 0 0 1-16 13z" fill="#fbbc05"/><path d="M15 15 27 7a13.500 13.500 0 0 1 1 8z" fill="#fbbc05"/><circle cx="15" cy="15" r="7" fill="#fff"/><circle cx="15" cy="15" r="5.500" fill="#2a75e6"/></svg></span>
      <span class="task dot"><svg class="i30" viewBox="0 0 30 30"><rect width="30" height="30" rx="3" fill="#222"/><path d="M10 1h5v9h-5a4.500 4.500 0 0 1 0-9z" fill="#f24e1e"/><path d="M15 1h5a4.500 4.500 0 0 1 0 9h-5z" fill="#ff7262"/><path d="M10 10h5v9h-5a4.500 4.500 0 0 1 0-9z" fill="#a259ff"/><circle cx="19.500" cy="14.500" r="4.500" fill="#1abcfe"/><path d="M10 19h5v5a4.500 4.500 0 1 1-5-5z" fill="#0acf83"/></svg></span>
      <span class="task"><svg class="i30" viewBox="0 0 30 30"><rect y="2" width="30" height="26" rx="2" fill="#555"/><rect y="2" width="30" height="6" fill="#999"/><path d="m5 12 6 5-6 5" fill="none" stroke="#fff" stroke-width="2"/><path d="M14 24h9" stroke="#fff" stroke-width="2"/></svg></span>
      <span class="task"><svg class="i30" viewBox="0 0 30 30"><circle cx="15" cy="15" r="15" fill="#fff"/><path d="M12 6v6H7" stroke="#36c5f0" stroke-width="3.500" fill="none"/><path d="M18 6v6h0M18 7v5h5" stroke="#2eb67d" stroke-width="3.500" fill="none"/><path d="M12 24v-6H7" stroke="#e01e5a" stroke-width="3.500" fill="none"/><path d="M18 24v-6h5" stroke="#ecb22e" stroke-width="3.500" fill="none"/></svg></span>
      <span class="task"><span class="tk-cal">31</span></span>
      <span class="task"><span class="tk-not">N</span></span>
      <span class="task"><span class="tk-via">V/A</span></span>
      <span class="task"><svg class="i30" viewBox="0 0 30 30"><ellipse cx="17" cy="15" rx="11" ry="13" fill="#123f4f" stroke="#a87e2b" stroke-width="1.500"/><path d="M17 5q6 8 0 18" stroke="#3bbcc2" stroke-width="3" fill="none"/><path d="M9 1h5v23h8l-3 5H10l2-3z" fill="#c89b3c"/></svg></span>
      <span class="task"><svg class="i30" viewBox="0 0 30 30"><path d="M21 1 29 5v20l-8 4L9 18l-5 4-3-2v-10l3-2 5 4z" fill="#23a6ee"/><path d="m21 8-7 7 7 7z" fill="#1c1c1c"/><path d="M21 1 29 5v20l-8 4z" fill="#0d87d6"/></svg></span>
      <span class="task"><svg class="i30" viewBox="0 0 30 30"><path d="M15 27 1 11l5-7h18l5 7z" fill="#0d5fa8"/><path d="m6 10 9 7 9-7-9 13z" fill="#1c1c1c"/><path d="m9 7 6 5 6-5" stroke="#4aa4e8" stroke-width="2" fill="none"/></svg></span>
      <span class="task"><span class="tk-gh"><svg class="i20 gh-w"><use href="#gh"/></svg></span></span>
    </div>
    <div class="tray">
      <svg class="i16 tray-up" viewBox="0 0 16 16"><path d="m2 11 6-6 6 6" fill="none" stroke="#fff" stroke-width="1.600"/></svg>
      <div class="tray-lang"><span>POR</span><span>PTB2</span></div>
      <svg class="i20 tray-wifi" viewBox="0 0 20 20"><g fill="none" stroke="#fff" stroke-width="1.300"><path d="M1 8q9-8 18 0M4 11q6-6 12 0M7 14q3-3 6 0"/></g><circle cx="10" cy="17" r="1.400" fill="#fff"/></svg>
      <svg class="i20 tray-spk" viewBox="0 0 20 20"><path d="M2 7h3l5-4v14l-5-4H2z" fill="none" stroke="#fff" stroke-width="1.200"/><path d="M13 7q2 3 0 6M16 4q3 6 0 12" fill="none" stroke="#ddd"/></svg>
      <svg class="i20 tray-bat" viewBox="0 0 20 20"><rect x="2" y="6" width="14" height="11" rx="2" fill="none" stroke="#fff" stroke-width="1.300"/><rect x="4" y="8" width="7" height="7" fill="#fff"/><path d="M17 9v5" stroke="#fff" stroke-width="2"/><path d="m7 2-2 5h4l-2 5" stroke="#fff" fill="none"/></svg>
      <div class="tray-clock"><span>14:32</span><span>26/08/2024</span></div>
      <svg class="i20 tray-bell" viewBox="0 0 20 20"><path d="M5 14V8a5 5 0 0 1 10 0v6l2 2H3zM8 18h4" fill="none" stroke="#fff" stroke-width="1.300"/></svg>
      <span class="copilot"><svg class="i30" viewBox="0 0 30 30"><path d="M11 1h8l5 14H13z" fill="#3ab0e8"/><path d="M19 1q6 0 7 6l3 10h-5z" fill="#a65fdb"/><path d="M11 1Q6 1 5 6L1 18q0 5 4 5h4z" fill="#38c6b5"/></svg><b>PRE</b></span>
    </div>
  </footer>
</div>
</body>
</html>
```

FILE: styles.css
```css
* { box-sizing: border-box; }
html, body { margin: 0; padding: 0; height: 100%; overflow: hidden; background: #0a0a0a; }
body { font-family: "Noto Sans", "Liberation Sans", sans-serif; }
svg { display: block; flex: none; }
.defs { position: absolute; width: 0; height: 0; }
u { text-underline-offset: 2px; }
.i12 { width: 12px; height: 12px; }
.i16 { width: 16px; height: 16px; }
.i18 { width: 18px; height: 18px; }
.i20 { width: 20px; height: 20px; }
.i26 { width: 26px; height: 26px; }
.i30 { width: 30px; height: 30px; }

.desktop { width: 1919px; height: 1079px; display: flex; flex-direction: column; }
.browser { flex: 1; display: flex; min-height: 0; }

/* left sidebar */
.sidebar { width: 51px; flex: none; background: #0a0a0a; display: flex; flex-direction: column; align-items: center; }
.side-top { height: 78px; padding-top: 11px; flex: none; }
.slot { height: 57px; flex: none; display: flex; align-items: center; justify-content: center; }
.slot-gpt { margin: -3px 0 3px; }
.slot-up { margin-top: -1px; }
.slot-up2 { margin-top: -1px; }
.slot-down { margin-bottom: 2px; }
.side-sep { height: 18px; flex: none; width: 18px; background: linear-gradient(#777, #777) center / 100% 1px no-repeat; }
.side-line { height: 1px; width: 100%; background: #444; margin-top: -3px; flex: none; }
.slot-img { margin-top: 16px; }
.side-dots { display: flex; gap: 4px; margin-top: 31px; }
.side-dots span { width: 4px; height: 4px; border-radius: 50%; background: #bdbdbd; }

/* window */
.window { flex: 1; min-width: 0; display: flex; flex-direction: column; }
.tabs { height: 38px; flex: none; display: flex; align-items: center; background: #0a0a0a linear-gradient(90deg, #c4c4c4 0 80%, transparent 90%) bottom / 100% 1px no-repeat; }
.tab-game { width: 47px; flex: none; padding-left: 13px; }
.tab { width: 110.3px; height: 38px; flex: none; display: flex; align-items: center; gap: 5px; padding-left: 7px; color: #c0c0c0; font-size: 14.5px; white-space: nowrap; }
.tab-label { width: 68px; overflow: hidden; -webkit-mask-image: linear-gradient(90deg, #000 80%, transparent); mask-image: linear-gradient(90deg, #000 80%, transparent); }
.tab-cut { width: 58px; }
.tab-short { width: 44px; color: #e6e6e6; }
.tab-active { background: #121212; border: 1px solid #c4c4c4; border-bottom: 0; border-radius: 7px 7px 0 0; padding-left: 6px; }
.tab-active .i12 { margin-left: 6px; }
.gh { color: #f4f4f4; }
.fav { width: 20px; height: 20px; flex: none; display: block; font-family: "Liberation Sans", sans-serif; font-weight: 700; text-align: center; }
.fav-in { background: #0a66c2; color: #fff; font-size: 16px; line-height: 20px; border-radius: 2px; }
.fav-bcg { background: #0b5d36; color: #fff; font-size: 9px; line-height: 20px; letter-spacing: -.5px; }
.tab-plus { width: 14px; height: 14px; margin-left: 11px; }
.win-ctrls { margin-left: auto; display: flex; gap: 30px; padding-right: 14px; }

.addr { height: 47px; flex: none; display: flex; align-items: center; background: #121212; padding: 2px 0 0 19px; }
.nav-back { width: 12px; height: 20px; }
.nav-fwd { width: 12px; height: 20px; margin-left: 28px; }
.nav-reload { width: 18px; height: 20px; margin-left: 27px; }
.nav-dots { width: 2px; height: 14px; margin-left: 13px; background: repeating-linear-gradient(#444 0 2px, transparent 2px 6px); }
.nav-lock { width: 14px; height: 20px; margin-left: 24px; }
.url { margin-left: 25px; color: #a3a3a3; font-size: 15.45px; white-space: nowrap; padding-top: 2px; }
.url b { font-weight: 400; color: #f2f2f2; }
.addr-tools { margin-left: auto; padding-right: 12px; display: flex; align-items: center; gap: 15px; }
.tool-gap { width: 2px; height: 14px; margin: 0 -3.5px; background: repeating-linear-gradient(#444 0 2px, transparent 2px 6px); }
.tool-wide { margin-left: 8px; }

.marks { height: 45px; flex: none; display: flex; align-items: center; gap: 19px; padding: 0 0 5px 17px; background: #121212; color: #bdbdbd; font-size: 14px; white-space: nowrap; }
.mark { display: flex; align-items: center; gap: 11px; }
.i-folder { width: 16px; height: 18px; }
.mark-fav { gap: 7px; margin-left: -4px; }
.fav-gov { width: 20px; height: 20px; background: #fff; color: #2d6bb8; font: 700 8px/9px "Liberation Sans", sans-serif; text-align: center; display: block; }
.marks-more { width: 14px; height: 14px; margin-left: auto; margin-right: 27px; }

/* SAP frame */
.sap { flex: 1; min-height: 0; position: relative; display: flex; flex-direction: column; background: #fff; }
.sap-title { height: 38px; flex: none; display: flex; align-items: center; background: #2b4c6c; color: #eef2f6; font-size: 16.3px; padding: 0 0 2px 22px; position: relative; }
.sap-menu { display: flex; gap: 17px; }
.sap-menu .on { color: #fff; font-weight: 500; }
.sap-handle { position: absolute; left: 899px; top: 0; width: 56px; height: 17px; background: #7d8a96; clip-path: polygon(0 0, 100% 0, 90% 100%, 10% 100%); display: flex; justify-content: center; }
.sap-user { position: absolute; left: 935px; top: 6px; font-weight: 700; color: #fff; font-size: 15.5px; text-decoration: underline; text-underline-offset: 2px; }
.sap-ctrls { margin-left: auto; display: flex; gap: 9px; padding-right: 14px; }

.sap-tools { height: 58px; flex: none; display: flex; align-items: center; padding: 10px 0 0 13px; gap: 8.3px; background: #46637d; color: #f6f8fa; border-bottom: 2px solid #8fa2b3; }
.ti { width: 28px; height: 32px; }
.dim { opacity: .35; }
.ti-box { width: 28px; height: 32px; flex: none; position: relative; display: flex; align-items: center; justify-content: center; font-family: "Liberation Sans", sans-serif; font-size: 17px; }
.ti-abs { position: absolute; inset: 0; width: 28px; height: 32px; }
.ti-box b, .ti-box i { font-weight: 700; }
.ti-box .pdf { font-size: 9px; }
.ti-box em { font-style: normal; font-size: 16px; }
.ti-after { margin-left: 12px; }
.ti-hidden { margin-left: 565px; }
.ti-gap { margin-left: 11px; }

.sap-main { flex: 1; min-height: 0; position: relative; display: flex; flex-direction: column; overflow: hidden; border-left: 2px solid #a9bbca;
  background:
    linear-gradient(105deg, transparent 0 83%, rgba(10, 50, 130, .12) 83.2%),
    linear-gradient(180deg, #2f5267 0%, #34556e 10%, #446279 38%, #4b6884 55%, #4e6e86 72%, #597590 100%); }
.main-top { height: 104px; flex: none; display: flex; align-items: center; }
.burger { margin-left: 50px; width: 23px; display: flex; flex-direction: column; gap: 6px; }
.burger span { height: 2.5px; background: #f4f4f4; border-radius: 1px; }
.main-ic { width: 24px; height: 22px; margin-left: 1650px; }
.main-ic-s { margin-left: 52px; width: 22px; }
.scroll { position: absolute; right: 9px; top: 95px; width: 10px; height: 626px; border-radius: 5px; background: #b5b3b8; }
.intro { text-align: center; margin-top: 197px; padding-left: 18px; color: #eef2f6; font-family: "Liberation Sans", sans-serif; font-size: 22.5px; text-shadow: 0 0 1px rgba(255,255,255,.55); }
.intro p { margin: 0; height: 62.5px; line-height: 26px; white-space: nowrap; }
.intro-plus { display: flex; align-items: flex-start; justify-content: center; gap: 0; }
.plus { width: 26px; height: 26px; margin: 2px 15px 0 13px; }
.dock { position: absolute; left: 0; bottom: 0; width: 196px; height: 35px; background: #2b4c6c; border-top: 3px solid #e39b00; display: flex; align-items: center; color: #d8e0e8; font-size: 14px; padding-left: 11px; }
.dock-text { width: 96px; overflow: hidden; white-space: nowrap; }
.dock-a { margin-left: 8px; }
.dock-b { margin-left: 8px; }

.status { height: 51px; flex: none; display: grid; grid-template-columns: 873px 108px 372px 366px 1fr; grid-template-rows: 16px 15px; gap: 6px 0; padding: 9px 0 0 6px; background: #fff; border-top: 1px solid #c9cfd6; position: relative; }
.fld { background: #e7eef6; border: 1px solid #c8ccd2; border-top-width: 2px; border-radius: 2px; margin-right: 6px; }
.fld-1 { margin-right: 0; }
.st-date { text-align: center; font-size: 11.5px; line-height: 15px; color: #111; padding-right: 6px; }
.st-logo { grid-row: 1 / span 2; grid-column: 5; display: flex; align-items: center; padding-left: 22px; gap: 3px; }
.logo-sap { font: italic 700 26px/1 "Liberation Sans", sans-serif; color: #a9a9a9; letter-spacing: -1.5px; -webkit-text-stroke: .7px #a9a9a9; }
.logo-r { display: flex; flex-direction: column; line-height: 1; }
.logo-bus { font-size: 10.5px; color: #a9a9a9; }
.logo-one { font-size: 17px; font-weight: 700; color: #f0ab00; line-height: 17px; }
.grip { position: absolute; right: 2px; bottom: 3px; width: 14px; height: 14px; background: repeating-linear-gradient(90deg, #9a9a9a 0 1px, transparent 1px 3px); clip-path: polygon(100% 0, 100% 100%, 0 100%); }

.preview { position: absolute; left: 1px; bottom: 0; width: 193px; height: 33px; display: flex; align-items: center; gap: 10px; padding-left: 4px; border: 2px solid #aaa; background: linear-gradient(#d0d0d0, #fff 45%); font-size: 13px; color: #333; }
.preview-ic { width: 24px; height: 28px; }

/* menus */
.menu { position: absolute; margin: 0; padding: 1px 0 1px; list-style: none; border: 2px solid #b4b4bc; border-top-color: #c9c9d0; color: #363636; font-size: 16px; background: linear-gradient(90deg, #f9fbfe 0 31px, #f0f3f8 31px); }
.menu li { height: 25px; line-height: 25px; padding-left: 50px; position: relative; white-space: nowrap; }
.menu .sub::after { content: ""; position: absolute; right: 10px; top: 7px; border-left: 5px solid #111; border-top: 4.500px solid transparent; border-bottom: 4.500px solid transparent; }
.menu .hov { background: #e8eff6; }
.m1 { left: 378px; top: 42px; width: 250px; z-index: 1; }
.m2 { left: 622px; top: 42px; width: 338px; z-index: 2; }
.m3 { left: 954px; top: 142px; width: 263px; z-index: 3; }
.m3 .sub::after { right: 4px; }
.m4 { left: 1217px; top: 142px; width: 418px; z-index: 4; }
.m4 .sub::after { right: 11px; }
.mi { position: absolute; left: 5px; top: 2px; width: 20px; height: 20px; }
.mi-dollar b { position: absolute; left: 5px; top: 0; width: 20px; text-align: center; font: 400 13px/25px "Liberation Sans", sans-serif; color: #222; z-index: 1; }
.redbox { position: absolute; top: -1px; height: 27px; width: 224px; border: 2px solid #e8000b; border-radius: 6px; }
.rb-1 { left: 2px; }
.rb-2 { left: 31px; }
.rb-4 { left: 33px; width: 271px; }

/* taskbar */
.taskbar { height: 60px; flex: none; display: flex; align-items: center; background: #1c1c1c; border-top: 1px solid #3a3a3a; position: relative; }
.task-icons { display: flex; margin-left: 576px; }
.task { width: 55px; height: 50px; flex: none; display: flex; align-items: center; justify-content: center; position: relative; }
.task.dot::after { content: ""; position: absolute; bottom: -1px; left: 25px; width: 5px; height: 4px; border-radius: 2px; background: #8a8a8a; }
.task-on { background: #2a2a2a; border-radius: 6px; }
.task-on::after { content: ""; position: absolute; bottom: 1px; left: 17px; width: 20px; height: 4px; border-radius: 2px; background: #6fd4da; }
.tk-cal { width: 28px; height: 30px; border: 2px solid #fff; border-radius: 3px; background: #111; color: #fff; font: 700 16px/26px "Liberation Serif", serif; text-align: center; }
.tk-not { width: 24px; height: 26px; border: 2px solid #eee; border-radius: 3px; background: #111; color: #fff; font: 700 15px/22px "Liberation Serif", serif; text-align: center; }
.tk-via { width: 30px; height: 30px; border-radius: 3px; background: #f4f4f4; color: #777; font: 700 16px/30px "Liberation Sans", sans-serif; text-align: center; letter-spacing: -1px; }
.tk-gh { width: 28px; height: 30px; border-radius: 50%; background: #6c2c9c; display: flex; align-items: center; justify-content: center; }
.gh-w { color: #f0e6f8; }
.tray { margin-left: auto; display: flex; align-items: center; color: #f2f2f2; font-size: 14.5px; padding-right: 24px; }
.tray-lang { display: flex; flex-direction: column; align-items: center; line-height: 20px; margin-left: 14px; width: 50px; }
.tray-wifi { margin-left: 13px; }
.tray-spk { margin-left: 9px; }
.tray-bat { margin-left: 11px; }
.tray-clock { display: flex; flex-direction: column; align-items: flex-end; line-height: 20px; margin-left: 20px; }
.tray-bell { margin-left: 9px; }
.copilot { position: relative; margin-left: 20px; width: 30px; height: 36px; }
.copilot b { position: absolute; right: -1px; bottom: 0; background: #f9c61e; color: #222; font: 700 9px/11px "Liberation Sans", sans-serif; padding: 0 2px; border-radius: 2px; }
```
